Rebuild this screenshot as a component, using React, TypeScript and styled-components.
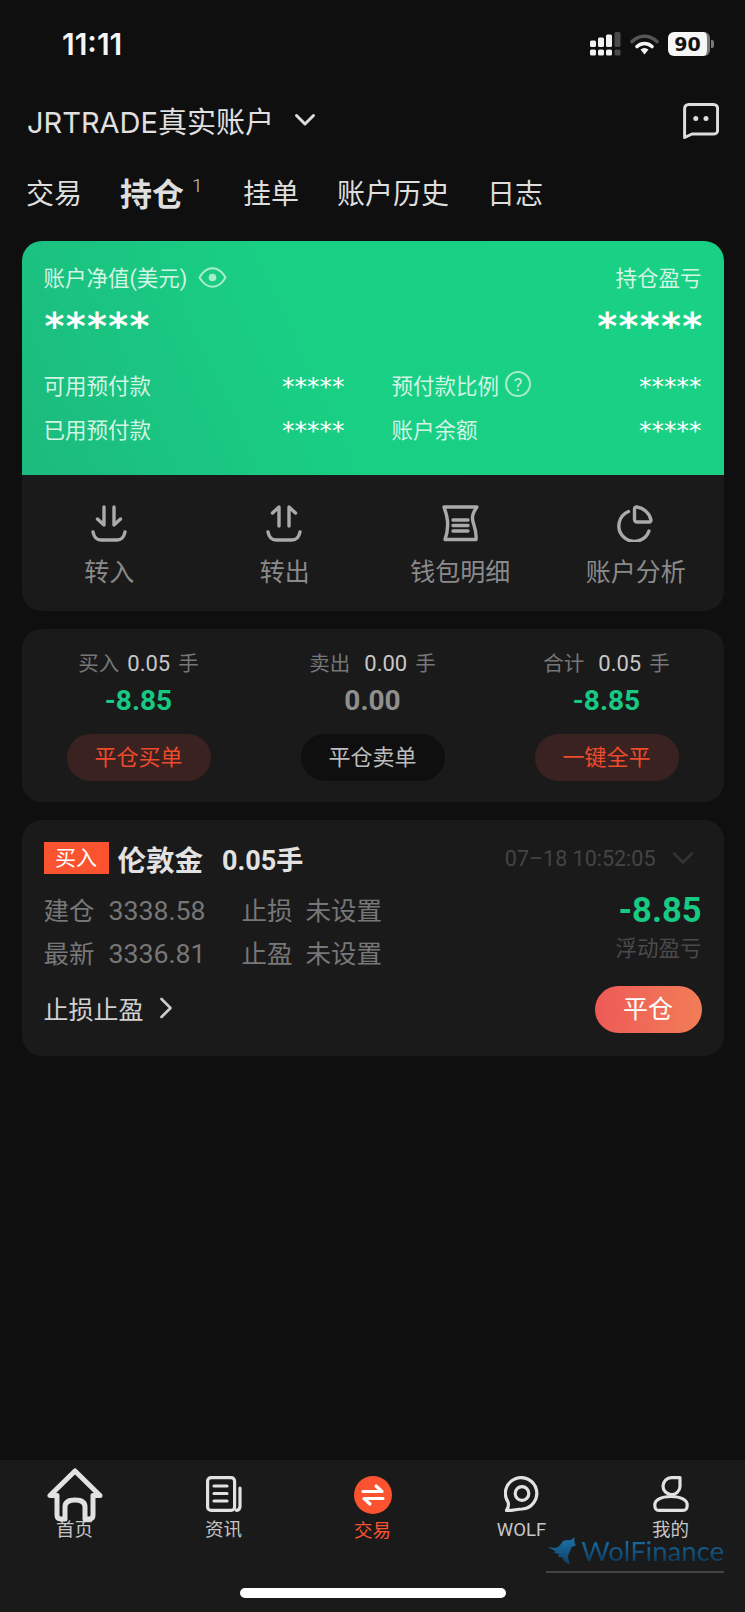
import React, { ReactElement } from "react";
import styled, { createGlobalStyle } from "styled-components";

const GlobalStyle = createGlobalStyle`
  html, body {
    margin: 0;
    padding: 0;
    background: #0f0f10;
  }
  * {
    box-sizing: border-box;
  }
`;

const positions = [
  { title: "买入", lots: "0.05", value: "-8.85", tone: "green", action: "平仓买单", danger: true, wide: false },
  { title: "卖出", lots: "0.00", value: "0.00", tone: "gray", action: "平仓卖单", danger: false, wide: true },
  { title: "合计", lots: "0.05", value: "-8.85", tone: "green", action: "一键全平", danger: true, wide: true },
];

export default function App(): ReactElement {
  return (
    <Page>
      <GlobalStyle />
      <StatusBar>
        <Clock>11:11</Clock>
        <StatusIcons>
          <svg width="31" height="24" viewBox="0 0 31 24">
            <g fill="#f2f2f2">
              <rect x="0" y="8.5" width="6" height="6.5" rx="1.5" />
              <rect x="8" y="5.5" width="6" height="9.5" rx="1.5" />
              <rect x="16" y="2.5" width="6" height="12.5" rx="1.5" />
              <rect x="0" y="17.5" width="6" height="6" rx="1.5" />
              <rect x="8" y="17.5" width="6" height="6" rx="1.5" />
              <rect x="16" y="17.5" width="6" height="6" rx="1.5" />
            </g>
            <g fill="#4a4a4a">
              <rect x="24.5" y="0" width="6" height="15" rx="1.5" />
              <rect x="24.5" y="17.5" width="6" height="6" rx="1.5" />
            </g>
          </svg>
          <svg width="29" height="21" viewBox="0 0 29 21">
            <path d="M2 7.5C9.5 .5 19.5 .5 27 7.5" fill="none" stroke="#555" strokeWidth="3.6" strokeLinecap="round" />
            <path d="M7 12.5C11.5 8.5 17.5 8.5 22 12.5" fill="none" stroke="#f4f4f4" strokeWidth="3.6" strokeLinecap="round" />
            <path d="M10.5 15.5C13 13.5 16 13.5 18.5 15.5L14.5 20.5Z" fill="#f4f4f4" />
          </svg>
          <Battery>90</Battery>
        </StatusIcons>
      </StatusBar>

      <Header>
        <AccountName>
          JRTRADE真实账户
          <svg width="22" height="14" viewBox="0 0 22 14">
            <path d="M2.5 2.5L11 11L19.5 2.5" fill="none" stroke="#ddd" strokeWidth="3" strokeLinecap="round" strokeLinejoin="round" />
          </svg>
        </AccountName>
        <ChatIcon width="36" height="36" viewBox="0 0 36 36">
          <path
            d="M1.6 5.5a4 4 0 0 1 4-4h25a4 4 0 0 1 4 4v22a3.5 3.5 0 0 1-3.5 3.5H9L1.6 34.5Z"
            fill="none"
            stroke="#ddd"
            strokeWidth="3"
            strokeLinejoin="round"
          />
          <circle cx="12.8" cy="15.5" r="2.5" fill="#ddd" />
          <circle cx="23" cy="15.5" r="2.5" fill="#ddd" />
        </ChatIcon>
      </Header>

      <Tabs>
        <Tab>交易</Tab>
        <Tab $active>
          持仓<TabCount>1</TabCount>
        </Tab>
        <Tab>挂单</Tab>
        <Tab>账户历史</Tab>
        <Tab>日志</Tab>
      </Tabs>

      <Content>
        <Card>
          <Summary>
            <SummaryHead>
              <SummaryLabel>
                账户净值(美元)
                <EyeIcon width="29" height="21" viewBox="0 0 29 21">
                  <path
                    d="M1.5 10.5C5.5 3.5 10 1.3 14.5 1.3S23.5 3.5 27.5 10.5C23.5 17.5 19 19.7 14.5 19.7S5.5 17.5 1.5 10.5Z"
                    fill="none"
                    stroke="#a9edcc"
                    strokeWidth="2"
                  />
                  <circle cx="14.5" cy="10.5" r="3.8" fill="#a9edcc" />
                </EyeIcon>
              </SummaryLabel>
              <SummaryLabel>持仓盈亏</SummaryLabel>
            </SummaryHead>
            <BigRow>
              <BigStars>*****</BigStars>
              <BigStars>*****</BigStars>
            </BigRow>
            <Stats>
              <Stat>
                <SummaryLabel>可用预付款</SummaryLabel>
                <SmallStars>*****</SmallStars>
              </Stat>
              <Stat>
                <SummaryLabel>
                  预付款比例<Help>?</Help>
                </SummaryLabel>
                <SmallStars>*****</SmallStars>
              </Stat>
              <Stat>
                <SummaryLabel>已用预付款</SummaryLabel>
                <SmallStars>*****</SmallStars>
              </Stat>
              <Stat>
                <SummaryLabel>账户余额</SummaryLabel>
                <SmallStars>*****</SmallStars>
              </Stat>
            </Stats>
          </Summary>
          <Actions>
            <Action>
              <svg width="37" height="37" viewBox="0 0 37 37" fill="none" stroke="#aaa" strokeWidth="3.4" strokeLinecap="round" strokeLinejoin="round">
                <path d="M13 2V20L6.5 14" />
                <path d="M23 2V20L29.5 14" />
                <path d="M2 27C3 32 6 35 10 35H26C30 35 33 32 34 27" />
              </svg>
              转入
            </Action>
            <Action>
              <svg width="37" height="37" viewBox="0 0 37 37" fill="none" stroke="#aaa" strokeWidth="3.4" strokeLinecap="round" strokeLinejoin="round">
                <path d="M13 21V2L6.5 8" />
                <path d="M23 21V2L29.5 8" />
                <path d="M2 27C3 32 6 35 10 35H26C30 35 33 32 34 27" />
              </svg>
              转出
            </Action>
            <Action>
              <svg width="37" height="37" viewBox="0 0 37 37" fill="none" stroke="#aaa" strokeWidth="3.4" strokeLinejoin="round">
                <path d="M2 2H35C32 6 30 9 30.5 14C31 20 35 25 34 34.5H3C5 29 6 22 5.5 16C5 10 3.5 6 2 2Z" />
                <path d="M11 15H26M11 20.5H26M11 26H26" strokeLinecap="round" />
              </svg>
              钱包明细
            </Action>
            <Action>
              <svg width="37" height="37" viewBox="0 0 37 37" fill="none" stroke="#aaa" strokeWidth="3.4" strokeLinecap="round" strokeLinejoin="round">
                <path d="M11.5 6.5A15.5 15.5 0 1 0 32 26" />
                <path d="M17.5 4C17.5 2.6 18.5 1.8 20 2C27 3 33 9 34 15C34 16.4 33.2 17 32 17H20C18.5 17 17.5 16 17.5 14.5Z" />
              </svg>
              账户分析
            </Action>
          </Actions>
        </Card>

        <Totals>
          {positions.map((p) => (
            <TotalColumn key={p.title}>
              <TotalLabel>
                {p.title}
                <Lots $wide={p.wide}>{p.lots}</Lots>手
              </TotalLabel>
              <TotalValue $tone={p.tone}>{p.value}</TotalValue>
              <CloseButton $danger={p.danger}>{p.action}</CloseButton>
            </TotalColumn>
          ))}
        </Totals>

        <Position>
          <PositionHead>
            <SideTag>买入</SideTag>
            <Symbol>伦敦金</Symbol>
            <Volume>0.05手</Volume>
            <OpenTime>07–18 10:52:05</OpenTime>
            <svg width="22" height="14" viewBox="0 0 22 14">
              <path d="M2 2.5L11 11.5L20 2.5" fill="none" stroke="#333" strokeWidth="2.6" strokeLinecap="round" strokeLinejoin="round" />
            </svg>
          </PositionHead>
          <PositionBody>
            <Details>
              <span>建仓</span>
              <Price>3338.58</Price>
              <span>止损</span>
              <span>未设置</span>
              <span>最新</span>
              <Price>3336.81</Price>
              <span>止盈</span>
              <span>未设置</span>
            </Details>
            <Profit>
              <ProfitValue>-8.85</ProfitValue>
              <ProfitLabel>浮动盈亏</ProfitLabel>
            </Profit>
          </PositionBody>
          <PositionFoot>
            <StopLink>
              止损止盈
              <svg width="14" height="22" viewBox="0 0 14 22">
                <path d="M2.5 2L11.5 11L2.5 20" fill="none" stroke="#ccc" strokeWidth="2.6" strokeLinecap="round" strokeLinejoin="round" />
              </svg>
            </StopLink>
            <ClosePosition>平仓</ClosePosition>
          </PositionFoot>
        </Position>
      </Content>

      <TabBar>
        <NavRow>
          <NavItem>
            <HomeIcon width="56" height="54" viewBox="0 0 56 54" fill="none" stroke="#e2e2e2" strokeWidth="5" strokeLinejoin="round">
              <path d="M28 3L3 27.5H10V47Q10 51 14 51H18V39Q18 32 28 32T38 39V51H42Q46 51 46 47V27.5H53Z" />
            </HomeIcon>
            <NavLabel>首页</NavLabel>
          </NavItem>
          <NavItem>
            <svg width="36" height="36" viewBox="0 0 36 36" fill="none" stroke="#e2e2e2" strokeWidth="3.2" strokeLinecap="round" strokeLinejoin="round">
              <rect x="1.6" y="1.6" width="27" height="32.8" rx="3.5" />
              <path d="M8 10H21M8 17.5H21M8 25H21" />
              <path d="M34 12V30Q34 34 30.5 34.4" />
            </svg>
            <NavLabel>资讯</NavLabel>
          </NavItem>
          <NavItem>
            <svg width="38" height="38" viewBox="0 0 38 38">
              <circle cx="19" cy="19" r="19" fill="#fb5230" />
              <path d="M9 15.5H28L22 10M29 22.5H10L16 28" fill="none" stroke="#fff" strokeWidth="3.2" strokeLinecap="round" strokeLinejoin="round" />
            </svg>
            <NavLabel $active $tight>交易</NavLabel>
          </NavItem>
          <NavItem>
            <svg width="36" height="36" viewBox="0 0 36 36" fill="none" stroke="#e2e2e2" strokeWidth="3.2" strokeLinejoin="round">
              <path d="M2.5 34.5C4.5 31.5 5 29 4 26A15.7 15.7 0 1 1 18 33C13 33 8 35 2.5 34.5Z" />
              <circle cx="18" cy="17.5" r="6.8" />
            </svg>
            <NavLabel>WOLF</NavLabel>
          </NavItem>
          <NavItem>
            <svg width="36" height="36" viewBox="0 0 36 36" fill="none" stroke="#e2e2e2" strokeWidth="3.2" strokeLinejoin="round">
              <path d="M27 1.6V10.5A8.5 8.5 0 1 1 18.5 1.6Z" />
              <path d="M1.8 29C1.8 24 8 20.5 18 20.5S34.2 24 34.2 29C34.2 33 33 34.4 30 34.4H6C3 34.4 1.8 33 1.8 29Z" />
            </svg>
            <NavLabel>我的</NavLabel>
          </NavItem>
        </NavRow>
        <HomeIndicator />
        <Watermark>
          <WatermarkBrand>
            <svg width="33" height="32" viewBox="70 120 100 95">
              <defs>
                <linearGradient id="wolf" x1="0" y1="0" x2="0" y2="1">
                  <stop offset="0" stopColor="#1b72ab" />
                  <stop offset="1" stopColor="#0f3f63" />
                </linearGradient>
              </defs>
              <path
                d="M75 155L100 158L112 152L125 135L140 132L148 133L161 124L160 135L165 150L152 155L145 172L140 185L146 211L128 200L122 188L108 186L112 178L95 172L100 168Z"
                fill="url(#wolf)"
              />
            </svg>
            <WatermarkName>WolFinance</WatermarkName>
          </WatermarkBrand>
          <WatermarkRule />
        </Watermark>
      </TabBar>
    </Page>
  );
}

const Page = styled.div`
  display: flex;
  flex-direction: column;
  width: 745px;
  height: 1612px;
  overflow: hidden;
  background: #0f0f10;
  font-family: Roboto, "Noto Sans CJK SC", sans-serif;
  color: #ddd;
`;

const StatusBar = styled.div`
  display: flex;
  align-items: center;
  justify-content: space-between;
  height: 88px;
  padding: 0 27px 0 62px;
`;

const Clock = styled.div`
  font-family: Inter, sans-serif;
  font-size: 30px;
  font-weight: 600;
  color: #f5f5f5;
`;

const StatusIcons = styled.div`
  display: flex;
  align-items: center;
  gap: 9px;
`;

const Battery = styled.div`
  position: relative;
  width: 42px;
  height: 24px;
  margin-right: 8px;
  border-radius: 6px;
  border-right: 3px solid #777;
  background: #f6f6f6;
  color: #111;
  font-family: "DejaVu Sans", sans-serif;
  font-size: 19px;
  font-weight: 700;
  line-height: 24px;
  text-align: center;

  &::after {
    content: "";
    position: absolute;
    top: 8px;
    right: -7px;
    width: 3px;
    height: 8px;
    border-radius: 0 2px 2px 0;
    background: #777;
  }
`;

const Header = styled.div`
  display: flex;
  align-items: center;
  justify-content: space-between;
  height: 64px;
  padding: 0 26px 0 27px;
`;

const ChatIcon = styled.svg`
  margin-top: 2px;
`;

const AccountName = styled.div`
  display: flex;
  align-items: center;
  gap: 20px;
  font-family: Inter, "Noto Sans CJK SC", sans-serif;
  font-size: 29px;
  color: #e0e0e0;
`;

const Tabs = styled.div`
  display: flex;
  align-items: center;
  gap: 38px;
  height: 80px;
  padding: 0 26px;
`;

const Tab = styled.div<{ $active?: boolean }>`
  display: flex;
  font-size: ${(p) => (p.$active ? "32px" : "28px")};
  font-weight: ${(p) => (p.$active ? 700 : 400)};
  color: #dedede;
`;

const TabCount = styled.span`
  width: 21px;
  padding: 0 0 0 8px;
  font-size: 19px;
  font-weight: 300;
  line-height: 33px;
  color: #ccc;
`;

const Content = styled.div`
  display: flex;
  flex-direction: column;
  gap: 18px;
  padding: 9px 21.5px 0;
`;

const Card = styled.div`
  height: 370px;
  overflow: hidden;
  border-radius: 20px;
  background: #1a1a1b;
`;

const Summary = styled.div`
  height: 234px;
  padding: 19px 22px 0;
  background: linear-gradient(65deg, #1cba7e 0%, #19cf84 42%, #19d185 100%);
  color: #fff;
`;

const SummaryHead = styled.div`
  display: flex;
  justify-content: space-between;
  height: 30px;
`;

const SummaryLabel = styled.div`
  display: flex;
  align-items: center;
  gap: 10px;
  height: 32px;
  font-size: 21.5px;
  color: #d2f5e4;
`;

const EyeIcon = styled.svg`
  margin: 3px 0 0 1px;
`;

const BigRow = styled.div`
  display: flex;
  justify-content: space-between;
  height: 40px;
  margin: 10px -2px 0 1px;
`;

const BigStars = styled.div`
  padding-top: 6px;
  font-family: "DejaVu Sans", sans-serif;
  font-size: 38px;
  font-weight: 700;
  letter-spacing: 1.4px;
  line-height: 40px;
  color: #fff;
`;

const Stats = styled.div`
  display: grid;
  grid-template-columns: 301px 310px;
  justify-content: space-between;
  row-gap: 12px;
  margin-top: 28px;
`;

const Stat = styled.div`
  display: flex;
  justify-content: space-between;
  height: 32px;
`;

const SmallStars = styled.div`
  padding-top: 4px;
  font-family: "DejaVu Sans", sans-serif;
  font-size: 25px;
  line-height: 30px;
  color: #fff;
`;

const Help = styled.span`
  display: inline-flex;
  align-items: center;
  justify-content: center;
  width: 26px;
  height: 26px;
  margin-left: -4px;
  border: 2px solid #a6ecca;
  border-radius: 50%;
  font-size: 18px;
  color: #c4f2da;
`;

const Actions = styled.div`
  display: grid;
  grid-template-columns: repeat(4, 1fr);
  height: 136px;
`;

const Action = styled.div`
  display: flex;
  flex-direction: column;
  align-items: center;
  gap: 15px;
  padding-top: 30px;
  font-size: 25px;
  line-height: 32px;
  color: #8a8a8a;
`;

const Totals = styled.div`
  display: grid;
  grid-template-columns: repeat(3, 1fr);
  height: 173px;
  padding-top: 20px;
  border-radius: 20px;
  background: #1a1a1b;
`;

const TotalColumn = styled.div`
  display: flex;
  flex-direction: column;
  align-items: center;
`;

const TotalLabel = styled.div`
  height: 30px;
  font-size: 20.5px;
  line-height: 30px;
  color: #777;
`;

const Lots = styled.span<{ $wide: boolean }>`
  margin: 0 8px 0 ${(p) => (p.$wide ? "14px" : "8px")};
  font-size: 22px;
  color: #c8c8c8;
`;

const TotalValue = styled.div<{ $tone: string }>`
  height: 32px;
  margin-top: 6px;
  font-size: 28px;
  font-weight: 700;
  line-height: 32px;
  color: ${(p) => (p.$tone === "green" ? "#17c982" : "#8f8f8f")};
`;

const CloseButton = styled.div<{ $danger: boolean }>`
  width: 144px;
  height: 47px;
  margin-top: 17px;
  border-radius: 24px;
  background: ${(p) => (p.$danger ? "#3a2220" : "#0f0f10")};
  font-size: 22px;
  line-height: 47px;
  text-align: center;
  color: ${(p) => (p.$danger ? "#ee4a2c" : "#bdbdbd")};
`;

const Position = styled.div`
  height: 236px;
  padding: 22px 22px 0;
  border-radius: 20px;
  background: #1a1a1b;
`;

const PositionHead = styled.div`
  display: flex;
  align-items: center;
  height: 32px;

  svg {
    margin-left: 16px;
    margin-right: 8px;
  }
`;

const SideTag = styled.div`
  width: 65px;
  height: 32px;
  background: #fb5230;
  font-size: 21px;
  line-height: 32px;
  text-align: center;
  color: #fff;
`;

const Symbol = styled.div`
  margin-left: 9px;
  font-size: 28.5px;
  font-weight: 700;
  color: #e2e2e2;
`;

const Volume = styled.div`
  margin-left: 19px;
  font-size: 27px;
  font-weight: 700;
  color: #e2e2e2;
`;

const OpenTime = styled.div`
  margin-left: auto;
  font-size: 21.5px;
  color: #444;
`;

const PositionBody = styled.div`
  display: flex;
  justify-content: space-between;
  margin-top: 21px;
`;

const Details = styled.div`
  display: grid;
  grid-template-columns: 65px 133px 64px auto;
  grid-auto-rows: 32px;
  row-gap: 11px;
  font-size: 25.5px;
  line-height: 32px;
  color: #777;
`;

const Price = styled.span`
  font-size: 26.7px;
`;

const Profit = styled.div`
  display: flex;
  flex-direction: column;
  align-items: flex-end;
`;

const ProfitValue = styled.div`
  height: 32px;
  font-size: 34.5px;
  font-weight: 700;
  line-height: 31px;
  color: #17c982;
`;

const ProfitLabel = styled.div`
  height: 30px;
  margin-top: 7px;
  font-size: 21.5px;
  line-height: 30px;
  color: #4a4a4a;
`;

const PositionFoot = styled.div`
  display: flex;
  align-items: center;
  justify-content: space-between;
  margin-top: 16px;
`;

const StopLink = styled.div`
  display: flex;
  align-items: center;
  gap: 15px;
  padding-bottom: 4px;
  font-size: 25px;
  color: #d0d0d0;
`;

const ClosePosition = styled.div`
  width: 107px;
  height: 47px;
  border-radius: 24px;
  background: linear-gradient(90deg, #ee5a57, #f27d57);
  font-size: 25px;
  line-height: 47px;
  text-align: center;
  color: #fff;
`;

const TabBar = styled.div`
  position: relative;
  display: flex;
  flex-direction: column;
  justify-content: space-between;
  height: 152px;
  margin-top: auto;
  padding: 16px 0 14px;
  background: #1a1a1b;
`;

const NavRow = styled.div`
  display: grid;
  grid-template-columns: repeat(5, 1fr);
`;

const NavItem = styled.div`
  display: flex;
  flex-direction: column;
  align-items: center;
  gap: 9px;
`;

const HomeIcon = styled.svg`
  margin: -8px 0 -10px;
  position: relative;
  z-index: 1;
`;

const NavLabel = styled.div<{ $active?: boolean; $tight?: boolean }>`
  height: 18px;
  margin-top: ${(p) => (p.$tight ? "-1px" : "0")};
  font-size: 18.5px;
  line-height: 18px;
  color: ${(p) => (p.$active ? "#fb5230" : "#c6c6c6")};
`;

const HomeIndicator = styled.div`
  align-self: center;
  width: 266px;
  height: 10px;
  border-radius: 5px;
  background: #fff;
`;

const Watermark = styled.div`
  position: absolute;
  top: 72px;
  left: 546px;
  width: 178px;
`;

const WatermarkBrand = styled.div`
  display: flex;
  align-items: center;
  height: 37px;
  gap: 4px;
`;

const WatermarkName = styled.div`
  font-family: Lato, sans-serif;
  font-size: 27.5px;
  line-height: 21px;
  background: linear-gradient(180deg, #1a6fa5, #0d3d60);
  -webkit-background-clip: text;
  background-clip: text;
  color: transparent;
`;

const WatermarkRule = styled.div`
  height: 2px;
  margin-top: 2px;
  background: #444;
`;
